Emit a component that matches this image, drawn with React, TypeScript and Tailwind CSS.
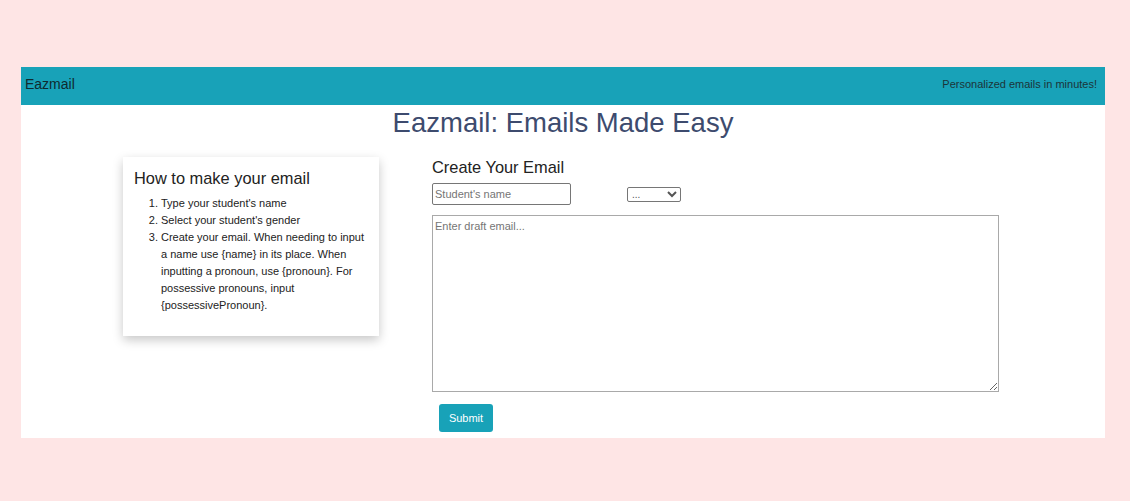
export default function App() {
  return (
    <div className="min-h-[501px] bg-[#fee5e5] pt-[67px] font-['Liberation_Sans',Arial,sans-serif]">
      <div className="ml-[21px] w-[1084px] bg-white">
        {/* Navbar */}
        <nav className="flex h-[38px] items-center justify-between bg-[#18a2b8] pb-[3px] pl-[4px] pr-[8px]">
          <span className="text-[14px] text-[#0f2a2f]">Eazmail</span>
          <span className="text-[11px] text-[#1c3439]">Personalized emails in minutes!</span>
        </nav>

        <h1 className="mt-[1px] text-center text-[27.5px] leading-[33px] text-[#3d4b6e]">Eazmail: Emails Made Easy</h1>

        <div className="mt-[18px] flex items-start pb-[6px]">
          {/* Instructions card */}
          <div className="ml-[102px] w-[256px] bg-white px-[11px] pt-[11px] pb-[22px] shadow-[0_4px_10px_rgba(0,0,0,0.22)]">
            <h2 className="text-[16.4px] leading-[20px] text-[#222]">How to make your email</h2>
            <ol className="mt-[7px] list-decimal pl-[27px] pr-[2px] text-[11px] leading-[17px] text-[#222]">
              <li>Type your student's name</li>
              <li>Select your student's gender</li>
              <li>
                Create your email. When needing to input a name use {"{name}"} in its place. When inputting a
                pronoun, use {"{pronoun}"}. For possessive pronouns, input {"{possessivePronoun}"}.
              </li>
            </ol>
          </div>

          {/* Email form */}
          <div className="flex flex-col pl-[53px]">
            <h2 className="text-[16.4px] leading-[20px] text-[#222]">Create Your Email</h2>
            <div className="mt-[6px] flex items-center">
              <input
                type="text"
                placeholder="Student's name"
                className="h-[22px] w-[139px] rounded-[2px] border border-[#767676] px-[2px] text-[11px] placeholder:text-[#757575]"
              />
              <select className="ml-[56px] h-[15px] w-[54px] rounded-[2px] border border-[#767676] text-[10px] leading-[13px] text-[#555]">
                <option>...</option>
              </select>
            </div>
            <textarea
              placeholder="Enter draft email..."
              className="mt-[10px] h-[177px] w-[567px] border border-[#a9a9a9] px-[2px] py-[2px] text-[11px] placeholder:text-[#757575]"
            />
            <div className="mt-[12px] pl-[7px]">
              <button className="h-[28px] w-[54px] rounded-[3px] bg-[#18a2b8] text-[11px] text-white">Submit</button>
            </div>
          </div>
        </div>
      </div>
    </div>
  );
}
